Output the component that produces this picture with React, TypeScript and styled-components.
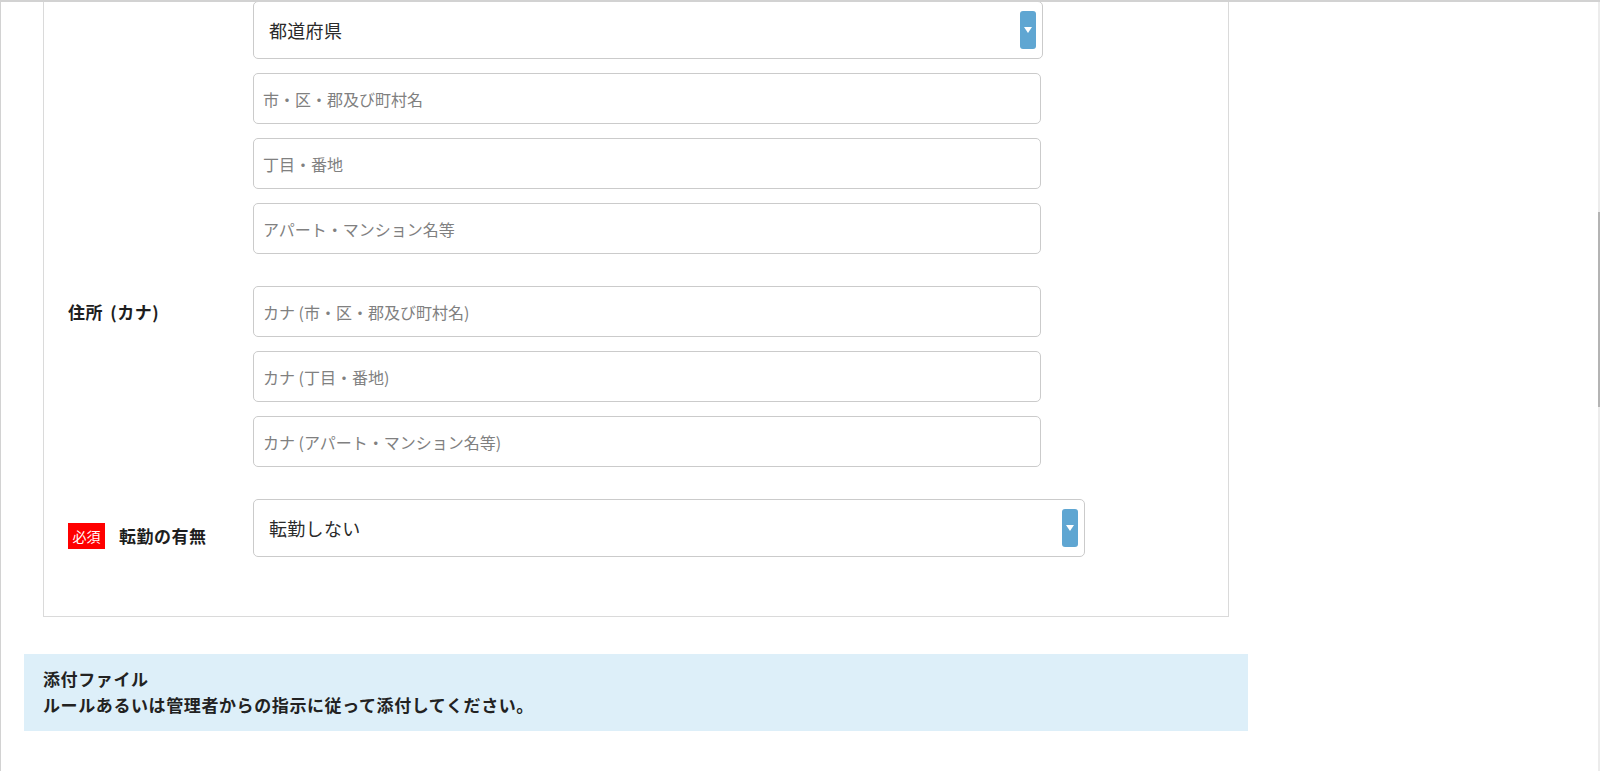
import React from "react";
import styled, { createGlobalStyle } from "styled-components";

const GlobalStyle = createGlobalStyle`
  html, body {
    margin: 0;
    padding: 0;
    background: #fff;
    overflow: hidden;
  }
  body {
    font-family: "Noto Sans CJK JP", "Noto Sans", sans-serif;
    color: #222;
  }
  * {
    box-sizing: border-box;
  }
`;

// window edge lines drawn over the page
const Frame = styled.div`
  position: fixed;
  inset: 0;
  border-top: 2px solid #d2d2d2;
  border-left: 1px solid #d2d2d2;
  pointer-events: none;
  z-index: 5;
`;

const ScrollTrack = styled.div`
  position: fixed;
  top: 2px;
  right: 0;
  bottom: 0;
  width: 2px;
  background: #ececec;
  z-index: 6;
`;

const ScrollThumb = styled.div`
  margin-top: 210px;
  height: 195px;
  background: #b4b4b4;
`;

const Page = styled.div`
  width: 1272px;
  padding: 0 24px;
  margin-top: -40px;
`;

const Panel = styled.div`
  margin: 0 19px;
  border: 1px solid #dadada;
  padding: 40px 24px 59px;
  display: grid;
  grid-template-columns: 185px 1fr;
  row-gap: 32px;
`;

// label sits beside a 51px input, or (with $shift) beside a 58px select
const Label = styled.div<{ $shift?: number }>`
  align-self: start;
  display: flex;
  align-items: center;
  gap: 14px;
  height: ${({ $shift }) => ($shift ? 58 - $shift : 51)}px;
  margin-top: ${({ $shift }) => $shift || 0}px;
  font-size: 17px;
  font-weight: 700;
  letter-spacing: 0.5px;
  word-spacing: 3px;
  color: #1e1e1e;
`;

const Badge = styled.span`
  display: flex;
  align-items: center;
  justify-content: center;
  width: 37px;
  height: 26px;
  background: #f00;
  color: #fff;
  font-size: 14px;
  font-weight: 400;
  letter-spacing: 0;
`;

const FieldStack = styled.div`
  display: flex;
  flex-direction: column;
  gap: 14px;
`;

const TextInput = styled.input`
  width: 788px;
  height: 51px;
  border: 1px solid #cbcbcb;
  border-radius: 5px;
  padding: 0 9px;
  font-family: inherit;
  font-size: 16px;
  color: #333;
  outline: none;
  &::placeholder {
    color: #808080;
  }
`;

const SelectBox = styled.div<{ $width: number }>`
  position: relative;
  width: ${({ $width }) => $width}px;
  height: 58px;
  border: 1px solid #cbcbcb;
  border-radius: 5px;
  padding-left: 15px;
  display: flex;
  align-items: center;
  font-size: 18px;
  letter-spacing: 0.3px;
  color: #2a2a2a;
`;

const SelectArrow = styled.span`
  position: absolute;
  right: 6px;
  top: 9px;
  width: 16px;
  height: 38px;
  border-radius: 3px;
  background: #5fa6d2;
  display: flex;
  align-items: center;
  justify-content: center;
`;

const InfoBox = styled.div`
  margin-top: 37px;
  background: #ddeff9;
  padding: 12px 19px 13px;
  font-size: 17px;
  font-weight: 700;
  letter-spacing: 0.6px;
  line-height: 26px;
  color: #222;
`;

const Select = ({ value, width }: { value: string; width: number }) => (
  <SelectBox $width={width}>
    {value}
    <SelectArrow>
      <svg width="8" height="6" viewBox="0 0 8 6">
        <path d="M0 0 H8 L4 6 Z" fill="#fff" />
      </svg>
    </SelectArrow>
  </SelectBox>
);

const App = () => {
  return (
    <>
      <GlobalStyle />
      <Frame />
      <ScrollTrack>
        <ScrollThumb />
      </ScrollTrack>
      <Page>
        <Panel>
          <Label />
          <FieldStack>
            <Select value="都道府県" width={790} />
            <TextInput placeholder="市・区・郡及び町村名" />
            <TextInput placeholder="丁目・番地" />
            <TextInput placeholder="アパート・マンション名等" />
          </FieldStack>

          <Label>住所 (カナ)</Label>
          <FieldStack>
            <TextInput placeholder="カナ (市・区・郡及び町村名)" />
            <TextInput placeholder="カナ (丁目・番地)" />
            <TextInput placeholder="カナ (アパート・マンション名等)" />
          </FieldStack>

          <Label $shift={15}>
            <Badge>必須</Badge>
            転勤の有無
          </Label>
          <Select value="転勤しない" width={832} />
        </Panel>
        <InfoBox>
          添付ファイル
          <br />
          ルールあるいは管理者からの指示に従って添付してください。
        </InfoBox>
      </Page>
    </>
  );
};

export default App;
